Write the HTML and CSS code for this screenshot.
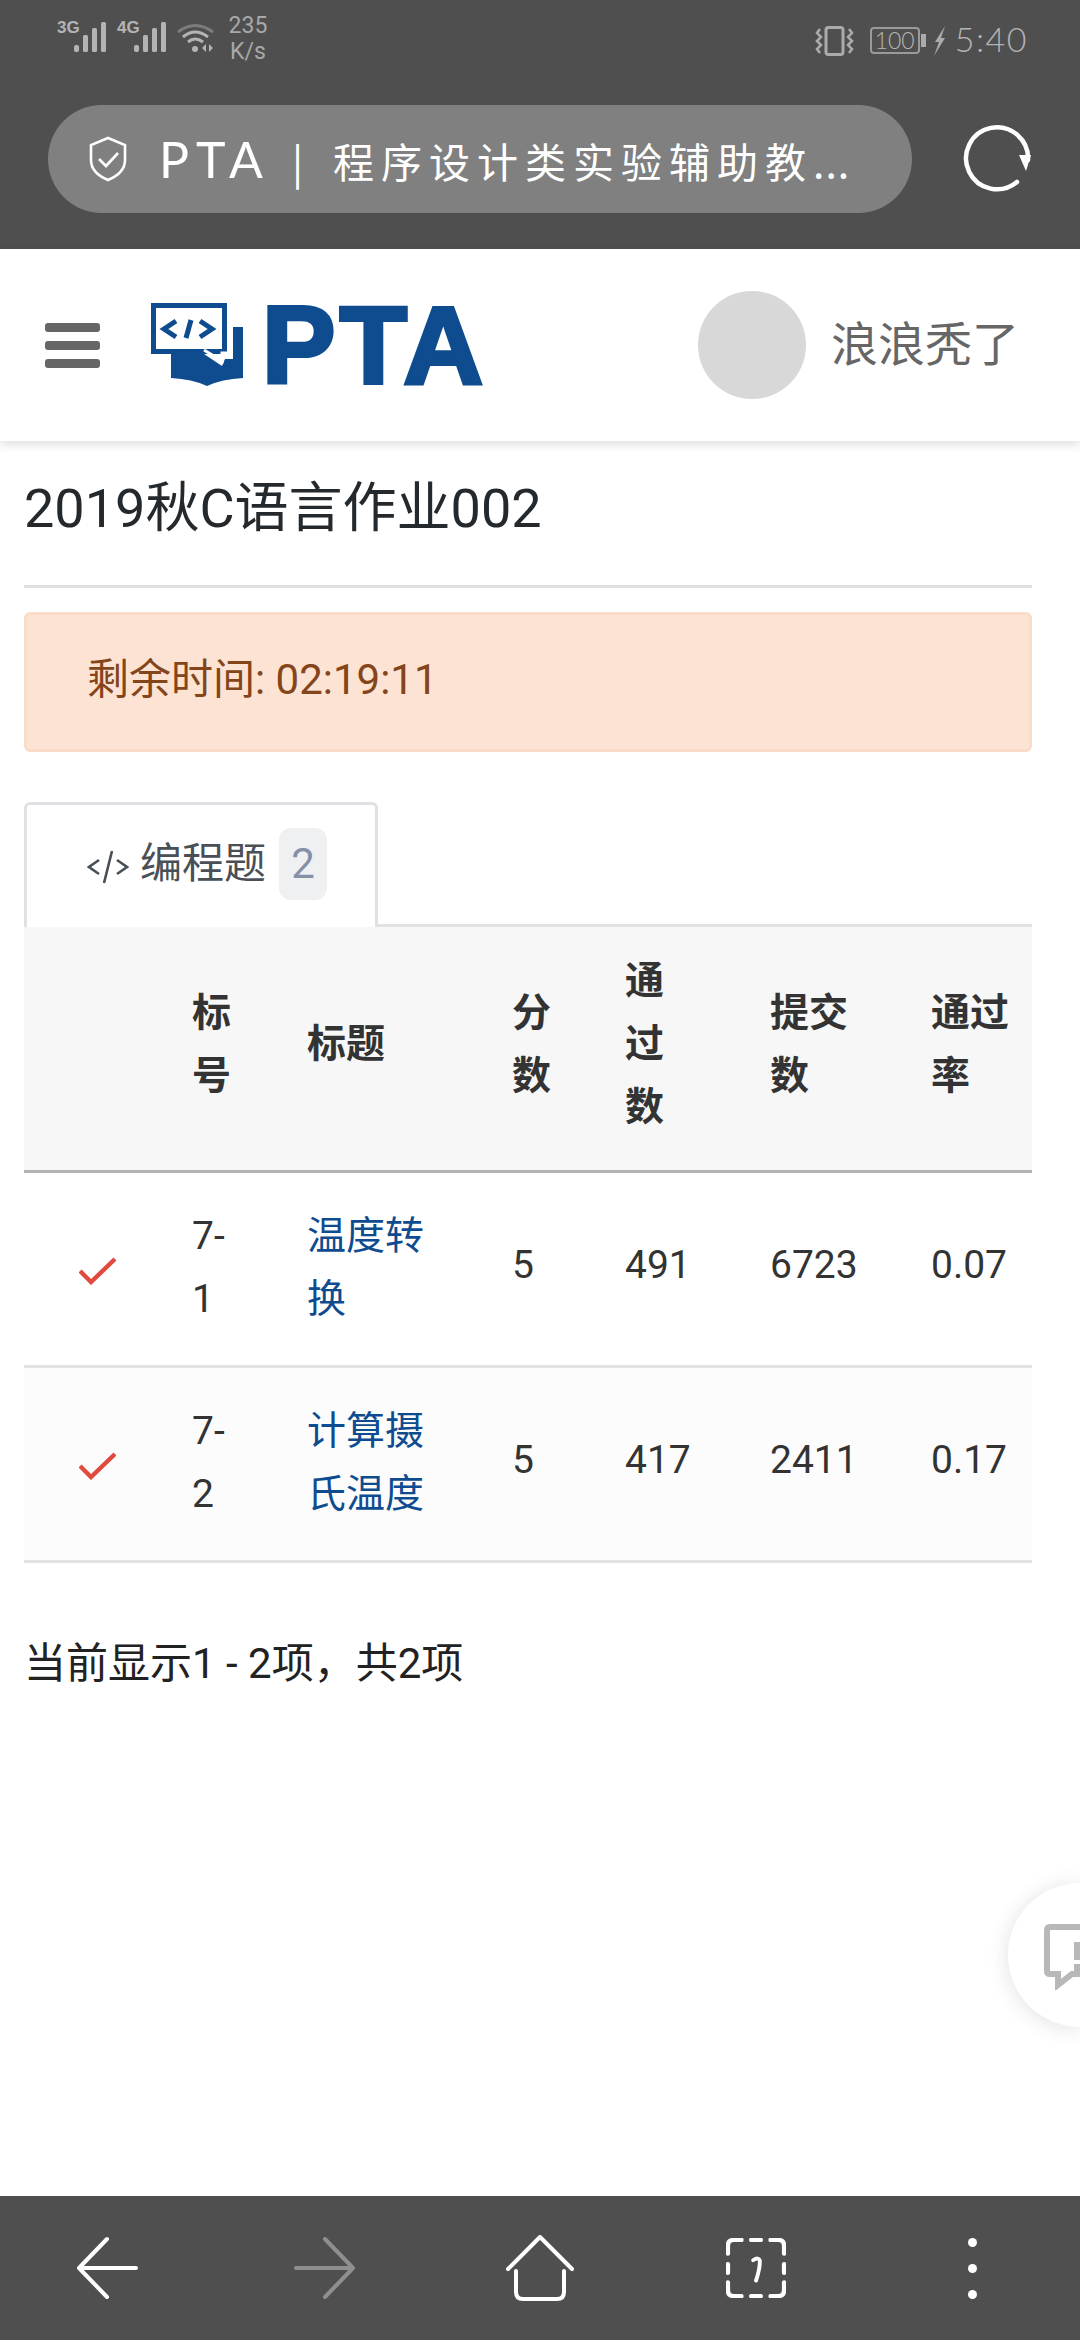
FILE: index.html
```html
<!DOCTYPE html>
<html lang="zh-CN">
<head>
  <meta charset="UTF-8">
  <title>PTA</title>
  <link rel="stylesheet" href="styles.css">
</head>
<body>

<!-- Phone status bar + browser address bar -->
<div class="topbar">
  <div class="statusbar">
    <div class="status-left">
      <span class="net">3G</span>
      <svg class="signal" viewBox="0 0 33 30"><rect x="0" y="23" width="5" height="7" rx="2"/><rect x="9" y="13" width="5" height="17" rx="1.5"/><rect x="18" y="6" width="5" height="24" rx="1.5"/><rect x="27" y="0" width="5" height="30" rx="1.5"/></svg>
      <span class="net net-second">4G</span>
      <svg class="signal" viewBox="0 0 33 30"><rect x="0" y="23" width="5" height="7" rx="2"/><rect x="9" y="13" width="5" height="17" rx="1.5"/><rect x="18" y="6" width="5" height="24" rx="1.5"/><rect x="27" y="0" width="5" height="30" rx="1.5"/></svg>
      <svg class="wifi" viewBox="0 0 37 30">
        <path d="M1 10 Q18 -3 36 10" fill="none" stroke="#7c7c7c" stroke-width="3"/>
        <path d="M6 15 Q18 5 31 15" fill="none" stroke="#b4b4b4" stroke-width="3"/>
        <path d="M11 20 Q18 14 26 20" fill="none" stroke="#b4b4b4" stroke-width="3"/>
        <circle cx="18" cy="27" r="3" fill="#b4b4b4"/>
        <path d="M29 22 V30 L25 26 Z M32 22 V30 L36 26 Z" fill="#b4b4b4"/>
      </svg>
      <div class="speed"><span>235</span><span>K/s</span></div>
    </div>
    <div class="status-right">
      <svg class="vibrate" viewBox="0 0 39 30" fill="none" stroke="#ababab" stroke-width="2.5">
        <rect x="11" y="1.5" width="17" height="27" rx="2.5" stroke-width="3"/>
        <path d="M5 3 L2 7 L6 11 L2 15 L6 19 L2 23 L5 27"/>
        <path d="M34 3 L37 7 L33 11 L37 15 L33 19 L37 23 L34 27"/>
      </svg>
      <div class="battery">100</div>
      <svg class="bolt" viewBox="0 0 13 30"><path d="M12 0 L2 16 H6 L1 30 L12 12 H8 Z" fill="#ababab"/></svg>
      <span class="clock">5:40</span>
    </div>
  </div>
  <div class="urlrow">
    <div class="urlpill">
      <svg class="shield" viewBox="0 0 38 46" fill="none" stroke="#fff" stroke-width="2.6">
        <path d="M19 2 L36 9 V24 Q36 37 19 44 Q2 37 2 24 V9 Z"/>
        <path d="M10 23 L17 30 L29 17"/>
      </svg>
      <span class="urltext"><span class="url-site">PTA</span><span class="url-sep">|</span>程序设计类实验辅助教<span class="url-dots">...</span></span>
    </div>
    <svg class="reload" viewBox="0 0 70 70" fill="none">
      <path d="M55 58 A31 31 0 1 1 66 36" stroke="#fff" stroke-width="4.5" stroke-linecap="round"/>
      <path d="M57 31 H69 L64 47 Z" fill="#fff"/>
    </svg>
  </div>
</div>

<!-- Site header -->
<div class="header">
  <div class="burger"><span></span><span></span><span></span></div>
  <div class="logo">
    <svg class="logo-icon" viewBox="0 0 93 84">
      <path d="M21 40 H83 V24 H93 V75 Q72 76 57 83 Q42 76 21 75 Z" fill="#0f4c8f"/>
      <path d="M77 0 H83 V56 H75 L72 63 L54 51 H77 Z" fill="#fff"/>
      <path d="M1 0 H77 V51 H1 Z" fill="#0f4c8f"/>
      <path d="M6 5 H72 V46 H6 Z" fill="#fff"/>
      <path d="M54 47 L72 58 V50 H78" fill="none" stroke="#fff" stroke-width="3"/>
      <path d="M26 18 L14 26 L26 34 M36 35 L41 17 M50 18 L62 26 L50 34" fill="none" stroke="#0f4c8f" stroke-width="5"/>
    </svg>
    <span class="logo-text">PTA</span>
  </div>
  <div class="user">
    <div class="avatar"></div>
    <span class="username">浪浪秃了</span>
  </div>
</div>

<div class="main">
  <h1 class="title">2019秋C语言作业002</h1>
  <div class="notice">剩余时间: 02:19:11</div>

  <div class="tabs">
    <div class="tab">
      <svg class="code-icon" viewBox="0 0 42 34" fill="none" stroke="#4a4f57" stroke-width="2.6">
        <path d="M12 10 L2 17 L12 24 M17 33 L25 1 M30 10 L40 17 L30 24"/>
      </svg>
      <span>编程题</span>
      <span class="badge">2</span>
    </div>
  </div>

  <table class="problems">
    <thead>
      <tr>
        <th class="col-check"></th>
        <th class="col-id">标<br>号</th>
        <th class="col-name">标题</th>
        <th class="col-score">分<br>数</th>
        <th class="col-pass">通<br>过<br>数</th>
        <th class="col-submit">提交<br>数</th>
        <th class="col-rate">通过<br>率</th>
      </tr>
    </thead>
    <tbody>
      <tr>
        <td class="check-cell"><svg class="check" viewBox="0 0 37 28" fill="none" stroke="#e04a3f" stroke-width="4.4"><path d="M1 14 L12 25 L36 2"/></svg></td>
        <td>7-<br>1</td>
        <td><a href="#">温度转<br>换</a></td>
        <td class="single">5</td>
        <td class="single">491</td>
        <td class="single">6723</td>
        <td class="single">0.07</td>
      </tr>
      <tr class="alt">
        <td class="check-cell"><svg class="check" viewBox="0 0 37 28" fill="none" stroke="#e04a3f" stroke-width="4.4"><path d="M1 14 L12 25 L36 2"/></svg></td>
        <td>7-<br>2</td>
        <td><a href="#">计算摄<br>氏温度</a></td>
        <td class="single">5</td>
        <td class="single">417</td>
        <td class="single">2411</td>
        <td class="single">0.17</td>
      </tr>
    </tbody>
  </table>

  <p class="pager">当前显示1 - 2项，共2项</p>
</div>

<!-- Floating feedback button, cut by the screen edge -->
<div class="feedback">
  <svg class="feedback-icon" viewBox="0 0 36 66" fill="none">
    <path d="M36 3 H6 Q3 3 3 6 V47 Q3 50 6 50 H14 V61 L28 50 H36" stroke="#b8b8b8" stroke-width="6"/>
    <path d="M30 18 H36 V36 H30 Z M30 40 H36 V48 H30 Z" fill="#b8b8b8"/>
  </svg>
</div>

<!-- Browser bottom bar -->
<div class="bottombar">
  <div class="nav-item"><svg class="nav-icon" viewBox="0 0 64 64" fill="none" stroke="#fff" stroke-width="4" stroke-linecap="round" stroke-linejoin="round"><path d="M60 32 H3 M31 3 L3 32 L31 61"/></svg></div>
  <div class="nav-item"><svg class="nav-icon" viewBox="0 0 64 64" fill="none" stroke="#8f8f8f" stroke-width="4" stroke-linecap="round" stroke-linejoin="round"><path d="M4 32 H61 M33 3 L61 32 L33 61"/></svg></div>
  <div class="nav-item"><svg class="nav-icon home" viewBox="0 0 70 66" fill="none" stroke="#fff" stroke-width="4" stroke-linecap="round" stroke-linejoin="round"><path d="M3 34 L35 2 L67 34 M11 36 V57 Q11 64 18 64 H52 Q59 64 59 57 V36"/></svg></div>
  <div class="nav-item"><svg class="nav-icon scan" viewBox="0 0 62 62" fill="none" stroke="#fff" stroke-width="4.5" stroke-linecap="round"><path d="M2 16 V8 Q2 2 8 2 H16 M26 2 H36 M46 2 H54 Q60 2 60 8 V16 M60 27 V36 M60 46 V54 Q60 60 54 60 H46 M36 60 H26 M16 60 H8 Q2 60 2 54 V46 M2 36 V27"/><path d="M28 23 Q34 19 35 24 Q35 32 31 44" stroke-width="4"/></svg></div>
  <div class="nav-item"><div class="dots"><span></span><span></span><span></span></div></div>
</div>

</body>
</html>
```
FILE: styles.css
```css
html, body {
  margin: 0;
  height: 2340px;
  overflow: hidden;
}

body {
  position: relative;
  display: flex;
  flex-direction: column;
  background: #fff;
  font-family: Roboto, "Noto Sans CJK SC", sans-serif;
  color: #333;
}

/* Status bar and address bar */
.topbar {
  height: 249px;
  background: #4f4f4f;
  flex-shrink: 0;
}

.statusbar {
  height: 105px;
  box-sizing: border-box;
  padding: 17px 52px 0 57px;
  display: flex;
  justify-content: space-between;
  align-items: flex-start;
}

.status-left {
  display: flex;
  align-items: flex-start;
}

.net {
  margin-top: 3px;
  width: 17px;
  font-family: "Liberation Sans Narrow", "Liberation Sans", sans-serif;
  font-size: 17px;
  line-height: 16px;
  font-weight: 700;
  color: #b4b4b4;
  white-space: nowrap;
}

.net-second {
  margin-left: 10px;
}

.signal {
  margin-top: 5px;
  width: 33px;
  height: 30px;
  fill: #b4b4b4;
}

.wifi {
  margin: 5px 0 0 10px;
  width: 37px;
  height: 30px;
}

.speed {
  margin: -4px 0 0 15px;
  width: 38px;
  display: flex;
  flex-direction: column;
  align-items: center;
  font-size: 23px;
  line-height: 26px;
  color: #a8a8a8;
}

.status-right {
  display: flex;
  align-items: center;
  padding-top: 5px;
}

.vibrate {
  width: 39px;
  height: 30px;
}

.battery {
  position: relative;
  margin-left: 16px;
  width: 50px;
  height: 27px;
  box-sizing: border-box;
  border: 2px solid #9a9a9a;
  border-radius: 4px;
  font-family: Lato, sans-serif;
  font-weight: 300;
  font-size: 23px;
  line-height: 23px;
  text-align: center;
  color: #b4b4b4;
}

/* battery nub */
.battery::after {
  content: "";
  position: absolute;
  right: -8px;
  top: 5px;
  width: 5px;
  height: 13px;
  background: #ababab;
}

.bolt {
  margin-left: 13px;
  width: 13px;
  height: 30px;
}

.clock {
  margin: -4px 0 0 9px;
  font-family: Lato, sans-serif;
  font-weight: 300;
  font-size: 34px;
  letter-spacing: 1.5px;
  color: #b4b4b4;
}

.urlrow {
  display: flex;
  align-items: center;
  padding-left: 48px;
}

.urlpill {
  width: 864px;
  height: 108px;
  border-radius: 54px;
  background: #808080;
  display: flex;
  align-items: center;
  padding-left: 41px;
  box-sizing: border-box;
}

.shield {
  width: 38px;
  height: 46px;
  flex-shrink: 0;
}

.urltext {
  margin-left: 32px;
  font-family: "Noto Sans CJK SC", sans-serif;
  font-size: 41px;
  letter-spacing: 7px;
  color: #fff;
  white-space: nowrap;
}

.url-site {
  font-family: Lato, sans-serif;
  font-weight: 400;
  font-size: 50px;
  letter-spacing: 7px;
}

.url-sep {
  margin: 0 23px 0 22px;
}

.url-dots {
  letter-spacing: 1px;
}

.reload {
  margin-left: 50px;
  width: 70px;
  height: 70px;
}

/* Site header */
.header {
  position: relative;
  height: 192px;
  flex-shrink: 0;
  box-sizing: border-box;
  padding: 0 61px 0 45px;
  display: flex;
  align-items: center;
  background: #fff;
  box-shadow: 0 3px 10px rgba(0,0,0,0.14);
}

.burger {
  width: 55px;
  display: flex;
  flex-direction: column;
  gap: 9px;
}

.burger span {
  height: 9px;
  border-radius: 3px;
  background: #666;
}

.logo {
  margin-left: 50px;
  display: flex;
  align-items: center;
  gap: 19px;
}

.logo-icon {
  width: 93px;
  height: 84px;
}

.logo-text {
  font-family: "Liberation Sans", sans-serif;
  font-size: 110px;
  line-height: 84px;
  font-weight: 700;
  letter-spacing: 4.5px;
  color: #0f4c8f;
  -webkit-text-stroke: 4px #0f4c8f;
}

.user {
  margin-left: auto;
  display: flex;
  align-items: center;
  gap: 25px;
}

.avatar {
  width: 108px;
  height: 108px;
  border-radius: 50%;
  background: #d8d8d8;
}

.username {
  padding-bottom: 10px;
  font-family: "Noto Sans CJK SC", sans-serif;
  font-size: 47px;
  color: #666;
}

/* Page content */
.main {
  flex: 1;
  padding: 0 48px 0 24px;
}

.title {
  margin: 0;
  padding: 33px 0 41px;
  border-bottom: 3px solid #e0e0e0;
  font-size: 54px;
  line-height: 70px;
  font-weight: 400;
  color: #24292e;
}

.notice {
  margin-top: 24px;
  height: 140px;
  box-sizing: border-box;
  padding: 0 0 14px 60px;
  display: flex;
  align-items: center;
  background: #fde3d3;
  border: 3px solid #f9dcc9;
  border-radius: 6px;
  font-size: 42px;
  color: #84451a;
}

.tabs {
  margin: 50px 0 -3px;
  display: flex;
}

.tab {
  position: relative;
  width: 354px;
  height: 125px;
  box-sizing: border-box;
  padding: 23px 0 0 60px;
  display: flex;
  align-items: flex-start;
  background: #fff;
  border: 3px solid #dfe1e4;
  border-bottom: none;
  border-radius: 6px 6px 0 0;
  font-size: 42px;
  line-height: 72px;
  color: #4a4f57;
}

.code-icon {
  margin: 22px 11px 0 0;
  width: 42px;
  height: 34px;
}

.badge {
  margin-left: 13px;
  width: 48px;
  height: 72px;
  border-radius: 12px;
  background: #eff0f2;
  text-align: center;
  color: #8690a8;
}

.problems {
  width: 100%;
  table-layout: fixed;
  border-collapse: separate;
  border-spacing: 0;
  font-size: 39px;
  line-height: 63px;
}

.problems th {
  box-sizing: border-box;
  padding: 23px 0 31px 12px;
  background: #f7f7f7;
  border-top: 3px solid #e2e3e3;
  border-bottom: 3px solid #b3b3b3;
  font-weight: 700;
  text-align: left;
}

.col-check { width: 156px; }
.col-id { width: 115px; }
.col-name { width: 205px; }
.col-score { width: 113px; }
.col-pass { width: 145px; }
.col-submit { width: 161px; }
.col-rate { width: 113px; }

.problems td {
  padding: 32px 0 34px 12px;
  border-bottom: 3px solid #e2e3e3;
  vertical-align: middle;
  white-space: nowrap;
}

.problems td.single {
  padding-bottom: 40px;
}

.problems .alt td {
  background: #fcfcfc;
}

.problems a {
  color: #0f4c8f;
  text-decoration: none;
}

.problems .check-cell {
  padding-left: 55px;
}

.check {
  display: block;
  width: 37px;
  height: 28px;
  margin-top: 6px;
}

.pager {
  margin: 69px 0 0;
  font-size: 42px;
  line-height: 63px;
  color: #222;
}

/* Feedback button */
.feedback {
  position: absolute;
  right: 0;
  top: 1883px;
  width: 72px;
  height: 144px;
  border-radius: 72px 0 0 72px;
  background: #fff;
  box-shadow: 0 2px 22px rgba(0,0,0,0.12);
}

.feedback-icon {
  position: absolute;
  left: 36px;
  top: 41px;
  width: 36px;
  height: 66px;
}

/* Browser bottom bar */
.bottombar {
  height: 144px;
  flex-shrink: 0;
  display: flex;
  background: #4f4f4f;
}

.nav-item {
  flex: 1;
  display: flex;
  align-items: center;
  justify-content: center;
}

.nav-icon {
  width: 64px;
  height: 64px;
}

.nav-icon.home {
  width: 70px;
  height: 66px;
}

.nav-icon.scan {
  width: 60px;
  height: 60px;
}

.dots {
  display: flex;
  flex-direction: column;
  gap: 17px;
}

.dots span {
  width: 9px;
  height: 9px;
  border-radius: 50%;
  background: #fff;
}
```
